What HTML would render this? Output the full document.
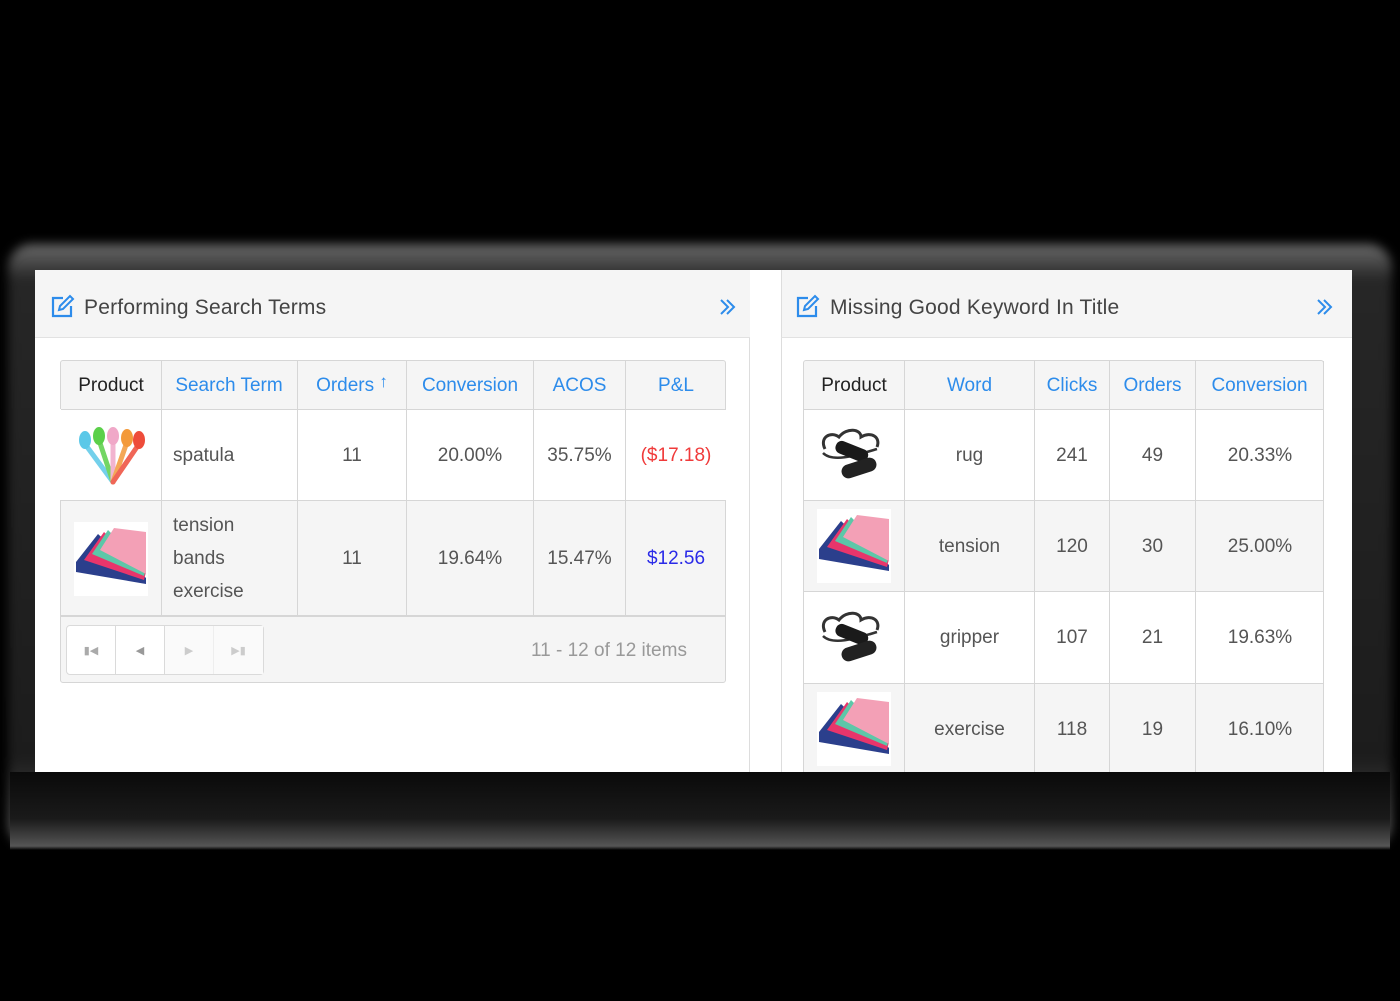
<!DOCTYPE html>
<html><head><meta charset="utf-8"><style>
*{margin:0;padding:0;box-sizing:border-box}
body{width:1400px;height:1001px;background:#000;position:relative;overflow:hidden;font-family:"Liberation Sans",sans-serif}
.glow{position:absolute;left:8px;top:244px;width:1384px;height:604px;background:linear-gradient(#6a6a6a,#262626 6%,#1c1c1c 85%,#5a5a5a);filter:blur(5px);border-radius:24px}
.card{position:absolute;left:35px;top:270px;width:1317px;height:502px;background:#fff;overflow:hidden}
.a{position:absolute}
.ph{background:#f5f5f5;border-bottom:1px solid #e2e2e2;height:68px}
.pt{position:absolute;top:26px;font-size:21px;color:#444;letter-spacing:.2px}
.c{position:absolute;display:flex;align-items:center;justify-content:center;font-size:19px;color:#555;border-right:1px solid #d6d6d6;border-bottom:1px solid #d6d6d6;text-align:center;line-height:33px}
.h{color:#2d8ceb;font-size:19px}
.h.k{color:#222}
</style></head><body>
<div class="glow"></div>
<div class="card">
<div class="a" style="left:0;top:0;width:715px;height:502px;border-right:1px solid #ddd"></div>
<div class="a ph" style="left:0;top:0;width:715px"></div>
<svg class="a" style="left:15px;top:24px" width="26" height="24" viewBox="0 0 26 24"><path d="M13 4H3v18h18V12" fill="none" stroke="#2d8ceb" stroke-width="2.2"/><path d="M9 16l1-4L20 2l3 3-10 10z" fill="none" stroke="#2d8ceb" stroke-width="2"/></svg>
<div class="pt" style="left:49px">Performing Search Terms</div>
<svg class="a" style="left:683px;top:28px" width="18" height="18" viewBox="0 0 18 18"><path d="M3 2l7 7-7 7M9 2l7 7-7 7" fill="none" stroke="#2d8ceb" stroke-width="2"/></svg>
<div class="a" style="left:746px;top:0;width:571px;height:502px;border-left:1px solid #ddd"></div>
<div class="a ph" style="left:746px;top:0;width:571px;border-left:1px solid #ddd"></div>
<svg class="a" style="left:760px;top:24px" width="26" height="24" viewBox="0 0 26 24"><path d="M13 4H3v18h18V12" fill="none" stroke="#2d8ceb" stroke-width="2.2"/><path d="M9 16l1-4L20 2l3 3-10 10z" fill="none" stroke="#2d8ceb" stroke-width="2"/></svg>
<div class="pt" style="left:795px">Missing Good Keyword In Title</div>
<svg class="a" style="left:1280px;top:28px" width="18" height="18" viewBox="0 0 18 18"><path d="M3 2l7 7-7 7M9 2l7 7-7 7" fill="none" stroke="#2d8ceb" stroke-width="2"/></svg>
</div>

<div class="a" style="left:60px;top:360px;width:666px;height:323px;border:1px solid #d6d6d6;border-radius:3px;background:#f5f5f5"></div>
<div class="a" style="left:60px;top:409px;width:666px;height:91px;background:#fff"></div>
<div class="c h k" style="left:61px;top:361px;width:101px;height:49px">Product</div>
<div class="c h" style="left:161px;top:361px;width:137px;height:49px">Search Term</div>
<div class="c h" style="left:298px;top:361px;width:109px;height:49px">Orders&nbsp;<span style="font-size:17px;position:relative;top:-4px;font-weight:bold">↑</span></div>
<div class="c h" style="left:407px;top:361px;width:127px;height:49px">Conversion</div>
<div class="c h" style="left:534px;top:361px;width:92px;height:49px">ACOS</div>
<div class="c h" style="left:626px;top:361px;width:100px;height:49px;border-right:none">P&amp;L</div>

<div class="c" style="left:61px;top:410px;width:101px;height:91px"><svg width="76" height="70" viewBox="0 0 76 70"><g stroke-width="5" stroke-linecap="round" opacity=".85"><path d="M40 62L12 24" stroke="#5bc8e8"/><path d="M40 62L26 20" stroke="#5bd04a"/><path d="M40 62L40 20" stroke="#f0a8c8"/><path d="M40 62L54 22" stroke="#f39a3a"/><path d="M40 62L66 24" stroke="#ee4c3a"/></g><ellipse cx="12" cy="20" rx="6" ry="9" fill="#5bc8e8"/><ellipse cx="26" cy="16" rx="6" ry="9" fill="#5bd04a"/><ellipse cx="40" cy="16" rx="6" ry="9" fill="#f0a8c8"/><ellipse cx="54" cy="18" rx="6" ry="9" fill="#f39a3a"/><ellipse cx="66" cy="20" rx="6" ry="9" fill="#ee4c3a"/></svg></div>
<div class="c" style="left:161px;top:410px;width:137px;height:91px;justify-content:flex-start;padding-left:12px">spatula</div>
<div class="c" style="left:298px;top:410px;width:109px;height:91px">11</div>
<div class="c" style="left:407px;top:410px;width:127px;height:91px">20.00%</div>
<div class="c" style="left:534px;top:410px;width:92px;height:91px">35.75%</div>
<div class="c" style="left:626px;top:410px;width:100px;height:91px;border-right:none;color:#f03a3a">($17.18)</div>

<svg width="0" height="0" style="position:absolute"><defs>
<g id="rope"><rect width="74" height="72" fill="#fff"/><path d="M8 30C2 18 14 12 22 18C30 8 44 10 44 18C54 12 64 18 60 28" fill="none" stroke="#333" stroke-width="3"/><path d="M6 34C16 44 40 36 60 30" fill="none" stroke="#333" stroke-width="2.5"/><rect x="18" y="26" width="34" height="13" rx="6" transform="rotate(22 35 32)" fill="#1a1a1a"/><rect x="24" y="42" width="36" height="14" rx="7" transform="rotate(-18 42 49)" fill="#222"/></g>
<g id="band"><rect width="74" height="74" fill="#fff"/><path d="M2 40L24 12 72 56 72 62 2 50z" fill="#2b3f8c"/><path d="M10 38L30 10 72 50 70 58z" fill="#e8356b"/><path d="M18 32L34 8 72 46 70 54z" fill="#5cc7a8"/><path d="M26 28L40 6 72 10 72 52z" fill="#f3a0b6"/></g>
</defs></svg>

<div class="c" style="left:61px;top:501px;width:101px;height:116px"><svg width="74" height="74"><use href="#band"/></svg></div>
<div class="c" style="left:161px;top:501px;width:137px;height:116px;justify-content:flex-start;padding-left:12px;text-align:left">tension<br>bands<br>exercise</div>
<div class="c" style="left:298px;top:501px;width:109px;height:116px">11</div>
<div class="c" style="left:407px;top:501px;width:127px;height:116px">19.64%</div>
<div class="c" style="left:534px;top:501px;width:92px;height:116px">15.47%</div>
<div class="c" style="left:626px;top:501px;width:100px;height:116px;border-right:none;color:#2a2ae8">$12.56</div>
<div class="a" style="left:61px;top:615px;width:664px;height:2px;background:#d6d6d6"></div>
<div class="a" style="left:66px;top:625px;width:198px;height:50px;border:1px solid #dadada;border-radius:4px;background:#fff;display:flex">
<div style="width:49px;border-right:1px solid #dadada;display:flex;align-items:center;justify-content:center;color:#aaa;font-size:11px">▮◀</div>
<div style="width:49px;border-right:1px solid #dadada;display:flex;align-items:center;justify-content:center;color:#999;font-size:11px">◀</div>
<div style="width:49px;border-right:1px solid #eee;background:#fafafa;display:flex;align-items:center;justify-content:center;color:#ccc;font-size:11px">▶</div>
<div style="width:49px;background:#fafafa;display:flex;align-items:center;justify-content:center;color:#ccc;font-size:11px">▶▮</div>
</div>
<div class="a" style="left:531px;top:640px;font-size:19px;color:#999">11 - 12 of 12 items</div>

<div class="a" style="left:803px;top:360px;width:521px;height:420px;border:1px solid #d6d6d6;border-radius:3px;background:#f5f5f5"></div>
<div class="a" style="left:804px;top:409px;width:519px;height:91px;background:#fff"></div>
<div class="a" style="left:804px;top:591px;width:519px;height:92px;background:#fff"></div>
<div class="c h k" style="left:804px;top:361px;width:101px;height:49px">Product</div>
<div class="c h" style="left:905px;top:361px;width:130px;height:49px">Word</div>
<div class="c h" style="left:1035px;top:361px;width:75px;height:49px">Clicks</div>
<div class="c h" style="left:1110px;top:361px;width:86px;height:49px">Orders</div>
<div class="c h" style="left:1196px;top:361px;width:128px;height:49px">Conversion</div>

<div class="c" style="left:804px;top:410px;width:101px;height:91px"><svg width="74" height="72"><use href="#rope"/></svg></div>
<div class="c" style="left:905px;top:410px;width:130px;height:91px">rug</div>
<div class="c" style="left:1035px;top:410px;width:75px;height:91px">241</div>
<div class="c" style="left:1110px;top:410px;width:86px;height:91px">49</div>
<div class="c" style="left:1196px;top:410px;width:128px;height:91px;border-right:none">20.33%</div>

<div class="c" style="left:804px;top:501px;width:101px;height:91px"><svg width="74" height="74"><use href="#band"/></svg></div>
<div class="c" style="left:905px;top:501px;width:130px;height:91px">tension</div>
<div class="c" style="left:1035px;top:501px;width:75px;height:91px">120</div>
<div class="c" style="left:1110px;top:501px;width:86px;height:91px">30</div>
<div class="c" style="left:1196px;top:501px;width:128px;height:91px;border-right:none">25.00%</div>

<div class="c" style="left:804px;top:592px;width:101px;height:92px"><svg width="74" height="72"><use href="#rope"/></svg></div>
<div class="c" style="left:905px;top:592px;width:130px;height:92px">gripper</div>
<div class="c" style="left:1035px;top:592px;width:75px;height:92px">107</div>
<div class="c" style="left:1110px;top:592px;width:86px;height:92px">21</div>
<div class="c" style="left:1196px;top:592px;width:128px;height:92px;border-right:none">19.63%</div>

<div class="c" style="left:804px;top:684px;width:101px;height:91px"><svg width="74" height="74"><use href="#band"/></svg></div>
<div class="c" style="left:905px;top:684px;width:130px;height:91px">exercise</div>
<div class="c" style="left:1035px;top:684px;width:75px;height:91px">118</div>
<div class="c" style="left:1110px;top:684px;width:86px;height:91px">19</div>
<div class="c" style="left:1196px;top:684px;width:128px;height:91px;border-right:none">16.10%</div>

<div class="a" style="left:10px;top:772px;width:1380px;height:78px;background:linear-gradient(#0a0a0a,#1a1a1a 60%,#555 95%,#000)"></div>
<div class="a" style="left:0;top:850px;width:1400px;height:151px;background:#000"></div>
</body></html>
